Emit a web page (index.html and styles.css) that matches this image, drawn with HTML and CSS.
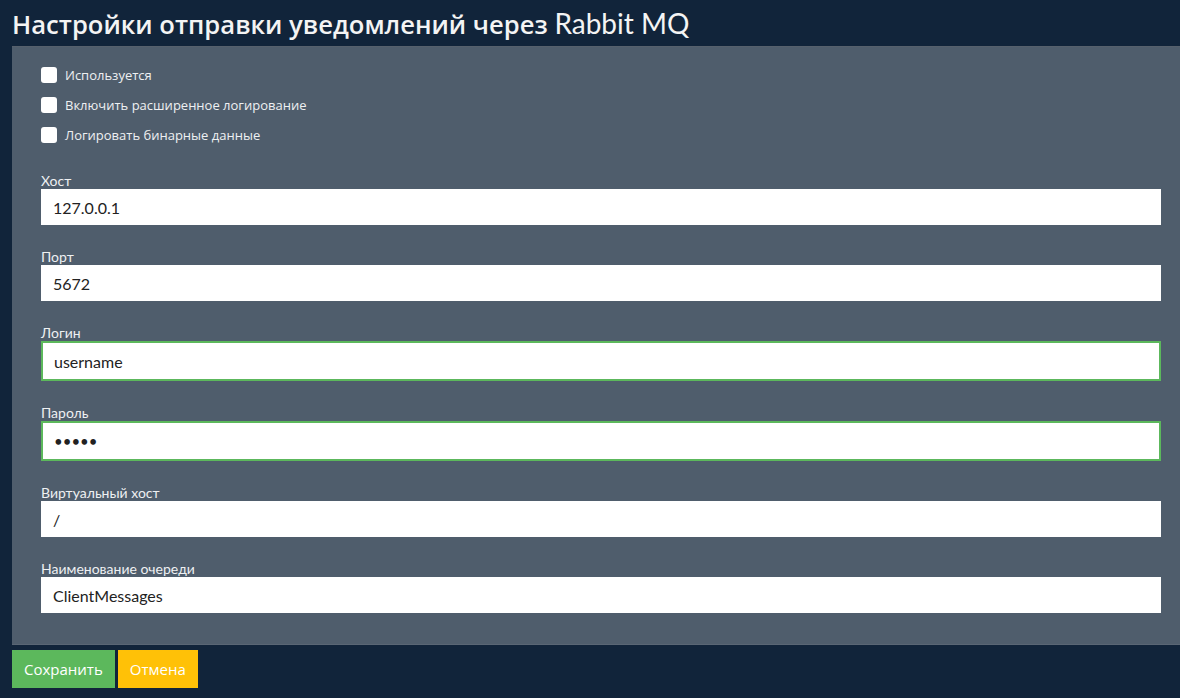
FILE: index.html
```html
<!DOCTYPE html>
<html lang="ru">
<head>
    <meta charset="UTF-8">
    <meta name="viewport" content="width=device-width, initial-scale=1.0">
    <title>Rabbit MQ</title>
    <link rel="stylesheet" href="styles.css">
</head>
<body>

    <h1 class="page-title">Настройки отправки уведомлений через <span class="latin">Rabbit MQ</span></h1>

    <!-- Форма настроек -->
    <div class="settings-panel">
        <label class="check-row"><input type="checkbox"><span class="box"></span>Используется</label>
        <label class="check-row"><input type="checkbox"><span class="box"></span>Включить расширенное логирование</label>
        <label class="check-row"><input type="checkbox"><span class="box"></span>Логировать бинарные данные</label>

        <div class="fields">
            <div class="field">
                <label for="host">Хост</label>
                <input type="text" id="host" value="127.0.0.1">
            </div>
            <div class="field">
                <label for="port">Порт</label>
                <input type="text" id="port" value="5672">
            </div>
            <div class="field">
                <label for="login">Логин</label>
                <input type="text" id="login" class="valid" value="username">
            </div>
            <div class="field">
                <label for="password">Пароль</label>
                <input type="password" id="password" class="valid" value="12345">
            </div>
            <div class="field">
                <label for="vhost">Виртуальный хост</label>
                <input type="text" id="vhost" value="/">
            </div>
            <div class="field">
                <label for="queue">Наименование очереди</label>
                <input type="text" id="queue" value="ClientMessages">
            </div>
        </div>
    </div>

    <!-- Кнопки -->
    <div class="actions">
        <button class="btn btn-save">Сохранить</button>
        <button class="btn btn-cancel">Отмена</button>
    </div>

</body>
</html>
```

FILE: styles.css
```css
/* Основные стили страницы */
body {
    font-family: 'Lato', 'Open Sans', sans-serif;
    background-color: #11243a;
    color: #f1f1f1;
    margin: 0;
    padding: 0 0 0 12px;
}

/* Заголовок */
.page-title {
    font-family: 'Open Sans', sans-serif;
    font-weight: 600;
    font-size: 25.6px;
    line-height: 46px;
    height: 46px;
    margin: 0;
    color: #f4f4f4;
    white-space: nowrap;
}

.page-title .latin {
    font-family: 'Lato', sans-serif;
    font-weight: 400;
    font-size: 28px;
}

/* Панель с настройками */
.settings-panel {
    background-color: #4f5d6c;
    border-top: 1px solid #56606c;
    border-bottom: 1px solid #5a6674;
    padding: 13px 19px 31px 29px;
}

/* Чекбоксы */
.check-row {
    display: flex;
    align-items: center;
    height: 30px;
    font-family: 'Open Sans', sans-serif;
    font-size: 13px;
    color: #eef0f2;
    cursor: pointer;
}

.check-row input {
    display: none;
}

.check-row .box {
    width: 16px;
    height: 16px;
    background-color: #fff;
    border-radius: 3px;
    margin-right: 8px;
}

/* Поля ввода */
.fields {
    margin-top: 22px;
}

.field {
    margin-bottom: 23px;
}

.field:last-child {
    margin-bottom: 0;
}

.field label {
    display: block;
    font-size: 14px;
    line-height: 17px;
    color: #eef0f2;
}

.field input {
    display: block;
    width: 100%;
    height: 36px;
    padding: 0 12px;
    border: none;
    background-color: #fff;
    color: #222;
    font-family: 'Lato', sans-serif;
    font-size: 16px;
    box-sizing: border-box;
    outline: none;
}

.field input.valid {
    height: 40px;
    border: 2px solid #5cb85c;
    padding: 0 11px;
}

.field input[type="password"] {
    font-size: 15px;
}

/* Кнопки */
.actions {
    display: flex;
    gap: 3px;
    padding-top: 5px;
}

.btn {
    font-family: 'Open Sans', sans-serif;
    font-size: 15px;
    color: #fff;
    border: none;
    height: 38px;
    padding: 0 12px;
    cursor: pointer;
}

.btn-save {
    background-color: #5cb85c;
}

.btn-cancel {
    background-color: #ffc107;
}
```
